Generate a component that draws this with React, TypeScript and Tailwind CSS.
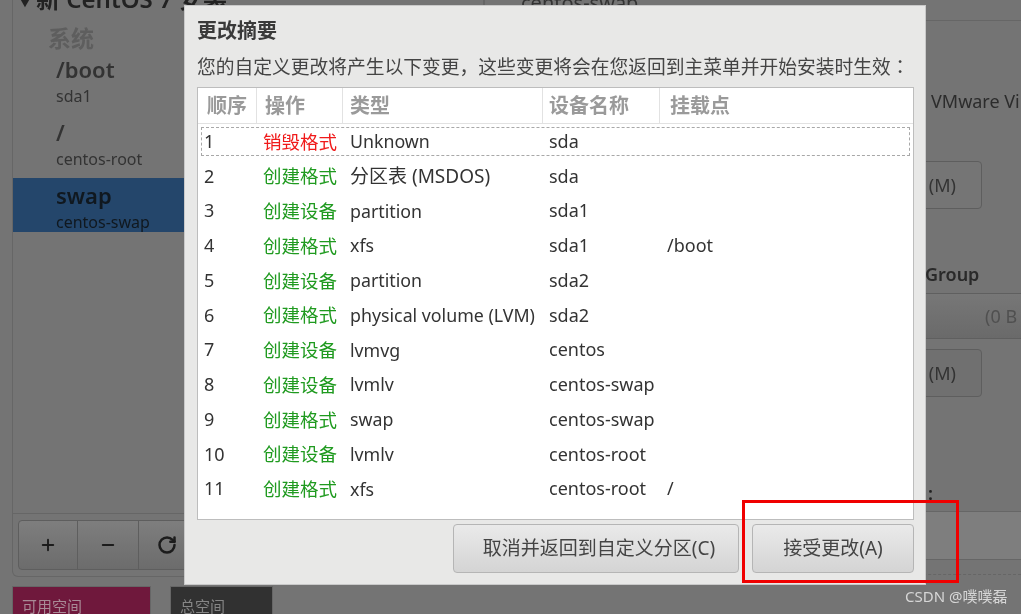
import { Minus, Plus, RotateCw } from "lucide-react";

const font = { fontFamily: '"Noto Sans", "Noto Sans CJK SC", sans-serif' };

const rows = [
  ["1", "销毁格式", "Unknown", "sda", ""],
  ["2", "创建格式", "分区表 (MSDOS)", "sda", ""],
  ["3", "创建设备", "partition", "sda1", ""],
  ["4", "创建格式", "xfs", "sda1", "/boot"],
  ["5", "创建设备", "partition", "sda2", ""],
  ["6", "创建格式", "physical volume (LVM)", "sda2", ""],
  ["7", "创建设备", "lvmvg", "centos", ""],
  ["8", "创建设备", "lvmlv", "centos-swap", ""],
  ["9", "创建格式", "swap", "centos-swap", ""],
  ["10", "创建设备", "lvmlv", "centos-root", ""],
  ["11", "创建格式", "xfs", "centos-root", "/"],
];

const headers = [
  ["顺序", "w-[59px] pl-[9px]"],
  ["操作", "w-[86px] pl-[8px]"],
  ["类型", "w-[200px] pl-[7px]"],
  ["设备名称", "w-[117px] pl-[6px]"],
  ["挂载点", "flex-1 pl-[10px]"],
];

function SidebarItem({ name, sub, active }: { name: string; sub: string; active?: boolean }) {
  return (
    <div className={`h-[54px] mb-[9px] pl-[43px] ${active ? "bg-[#24466b] text-[#10181f]" : "text-[#333]"}`}>
      <div className="text-[22px] font-semibold leading-[34px] h-[34px]">{name}</div>
      <div className="text-[16px] leading-[18px] pt-[1px]">{sub}</div>
    </div>
  );
}

export default function App() {
  return (
    <div className="relative w-[1021px] h-[614px] overflow-hidden bg-[#747474] text-[#2c2c2c] blur-[0.4px]" style={font}>
      {/* dimmed installer page behind the dialog */}
      <div className="flex h-full">
        <div className="w-[484px] pl-[12px] flex flex-col">
          <div className="border border-[#666] border-t-0 rounded-b-md h-[577px] shrink-0 flex flex-col">
            <div className="h-[18px] -mt-[6px] pl-[7px] flex items-center gap-[6px] text-[24px] leading-[18px] font-semibold text-[#222] whitespace-nowrap">
              <span className="text-[10px]">▼</span>
              <span className="-mt-[8px]">新 CentOS 7 安装</span>
            </div>
            <div className="pl-[35px] pt-[10px] h-[53px] text-[23px] leading-[32px] font-semibold text-[#5e5e5e]">系统</div>
            <div className="-mt-[13px]">
              <SidebarItem name="/boot" sub="sda1" />
              <SidebarItem name="/" sub="centos-root" />
              <SidebarItem name="swap" sub="centos-swap" active />
            </div>
            <div className="flex-1" />
            <div className="border-t border-[#666] h-[63px] px-[5px] pt-[6px]">
              <div className="flex h-[50px] w-[480px] rounded bg-gradient-to-b from-[#7e7e7e] to-[#6c6c6c] border border-[#5e5e5e]">
                <div className="w-[59px] flex items-center justify-center border-r border-[#5e5e5e]">
                  <Plus size={18} strokeWidth={2.5} className="text-[#1c1c1c]" />
                </div>
                <div className="w-[61px] flex items-center justify-center border-r border-[#5e5e5e]">
                  <Minus size={18} strokeWidth={2.5} className="text-[#1c1c1c]" />
                </div>
                <div className="w-[56px] flex items-center justify-center">
                  <RotateCw size={20} strokeWidth={3} className="text-[#1c1c1c]" />
                </div>
              </div>
            </div>
          </div>
          <div className="flex gap-[19px] mt-[9px]">
            <div className="w-[139px] h-[40px] bg-[#6f183c] border border-[#666] pl-[9px] text-[15px] leading-[38px] text-[#a88a96]">可用空间</div>
            <div className="w-[103px] h-[40px] bg-[#313131] border border-[#666] pl-[9px] text-[15px] leading-[38px] text-[#858585]">总空间</div>
          </div>
        </div>
        <div className="flex-1 flex flex-col">
          <div className="h-[23px] border-b border-l border-[#666] pl-[36px] text-[20px] leading-[10px] -mt-[2px] text-[#333] whitespace-nowrap">centos-swap</div>
          <div className="pl-[447px] pt-[68px] text-[18px] leading-[24px] whitespace-nowrap text-[#2c2c2c]">VMware Vi</div>
          <div className="ml-[301px] mt-[48px] w-[197px] h-[48px] border border-[#5e5e5e] rounded flex items-center justify-end pr-[25px] text-[18px] text-[#333] bg-[#757575]">(M)</div>
          <div className="pl-[441px] mt-[53px] text-[18px] leading-[24px] font-semibold text-[#2a2a2a]">Group</div>
          <div className="mt-[7px] h-[46px] border-y border-[#5f5f5f] bg-gradient-to-b from-[#777] to-[#6a6a6a] pl-[501px] text-[18px] leading-[44px] text-[#505050] whitespace-nowrap overflow-hidden">(0 B</div>
          <div className="ml-[301px] mt-[10px] w-[197px] h-[48px] border border-[#5e5e5e] rounded flex items-center justify-end pr-[25px] text-[18px] text-[#333] bg-[#707070]">(M)</div>
          <div className="pl-[444px] mt-[84px] text-[18px] leading-[24px] font-semibold text-[#222]">:</div>
          <div className="mt-[6px] h-[49px] border-y border-[#666] bg-[#7e7e7e]" />
          <div className="mt-[14px] border-t border-dashed border-[#666]" />
        </div>
      </div>

      {/* change summary dialog */}
      <div className="absolute left-[184px] top-[5px] w-[742px] h-[580px] bg-[#e8e8e7] border border-[#c9c9c9] pl-[12px] pr-[12px] flex flex-col">
        <div className="pt-[11px] h-[45px] text-[20px] leading-[28px] font-semibold text-[#3a3a3a]">更改摘要</div>
        <div className="h-[36px] text-[18.75px] leading-[26px] pt-[2px] text-[#444] whitespace-nowrap">
          您的自定义更改将产生以下变更，这些变更将会在您返回到主菜单并开始安装时生效<span className="font-['Noto_Sans_CJK_TC']">：</span>
        </div>
        <div className="w-[717px] h-[433px] bg-white border border-[#bdbdbd]">
          <div className="flex h-[36px] border-b border-[#e2e2e2]">
            {headers.map(([label, cls]) => (
              <div key={label} className={`${cls} border-r border-[#e2e2e2] last:border-r-0 text-[20px] leading-[35px] font-semibold text-[#9a9a9a] whitespace-nowrap`}>
                {label}
              </div>
            ))}
          </div>
          <div className="relative">
            <div className="absolute left-[3px] top-[3px] w-[709px] h-[29px] border border-dashed border-[#a8a8a8]" />
            {rows.map(([num, op, type, device, mount], i) => (
              <div key={num} className="flex h-[34.75px] items-center text-[18px] text-[#333] -translate-y-[0.5px]">
                <div className="w-[59px] pl-[6px]">{num}</div>
                <div className={`w-[86px] pl-[6px] text-[18.5px] ${i === 0 ? "text-[#f01a1a]" : "text-[#1f9a1f]"}`}>{op}</div>
                <div className={`w-[200px] pl-[7px] whitespace-nowrap ${i === 1 ? "text-[19px]" : "text-[17.8px]"}`}>{type}</div>
                <div className="w-[117px] pl-[6px] whitespace-nowrap">{device}</div>
                <div className="flex-1 pl-[7px]">{mount}</div>
              </div>
            ))}
          </div>
        </div>
        <div className="flex justify-end gap-[13px] mt-[4px] -mr-[1px]">
          <div className="w-[286px] h-[49px] pl-[6px] rounded border border-[#b5b5b5] bg-gradient-to-b from-[#eaeaea] to-[#d4d4d4] flex items-center justify-center text-[19px] text-[#444]">
            取消并返回到自定义分区(C)
          </div>
          <div className="w-[162px] h-[49px] rounded border border-[#b5b5b5] bg-gradient-to-b from-[#eaeaea] to-[#d4d4d4] flex items-center justify-center text-[19px] text-[#444]">
            接受更改(A)
          </div>
        </div>
      </div>

      {/* annotation and watermark over the screenshot */}
      <div className="absolute left-[742px] top-[500px] w-[217px] h-[83px] border-[3px] border-[#f00000]" />
      <div className="absolute left-[905px] top-[586px] text-[15px] leading-[20px] text-[#d6d6d6] whitespace-nowrap">CSDN @噗噗磊</div>
    </div>
  );
}
